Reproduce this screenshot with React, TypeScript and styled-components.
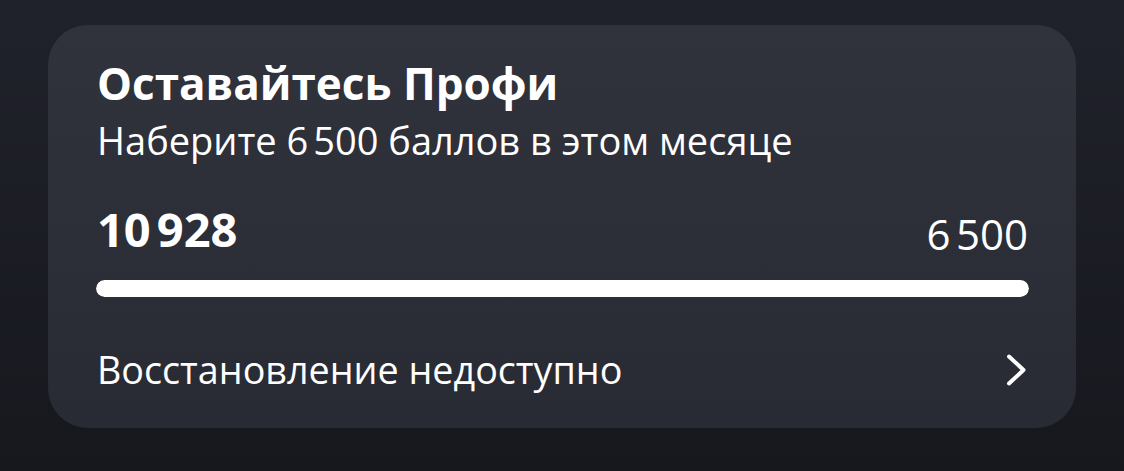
import styled, { createGlobalStyle } from 'styled-components';

const GlobalStyle = createGlobalStyle`
  html, body {
    margin: 0;
    padding: 0;
  }
  body {
    width: 1124px;
    height: 471px;
    overflow: hidden;
    background: linear-gradient(180deg, #20222b 0%, #17181e 100%);
    font-family: 'Open Sans', 'Noto Sans', sans-serif;
    color: #ffffff;
  }
`;

const Page = styled.div`
  padding: 25px 48px 0 48px;
`;

const Card = styled.div`
  height: 403px;
  box-sizing: border-box;
  border-radius: 40px;
  background: linear-gradient(180deg, #30323c 0%, #292b34 100%);
  padding: 36px 47px 0 48px;
  display: flex;
  flex-direction: column;
`;

const Title = styled.h1`
  margin: 0 0 0 1px;
  font-size: 44px;
  font-weight: 700;
  line-height: 44px;
`;

const Subtitle = styled.p`
  margin: 13px 0 0 1px;
  font-size: 38px;
  font-weight: 400;
  line-height: 44px;
`;

const Amounts = styled.div`
  margin: 44px 1px 0 1px;
  display: flex;
  justify-content: space-between;
  align-items: flex-end;
`;

const Current = styled.span`
  font-size: 47px;
  font-weight: 700;
  line-height: 46px;
`;

const Goal = styled.span`
  font-size: 42px;
  font-weight: 400;
  line-height: 36px;
`;

const Track = styled.div`
  margin-top: 28px;
  height: 17px;
  border-radius: 9px;
  background: rgba(255, 255, 255, 0.15);
  overflow: hidden;
`;

const Fill = styled.div`
  height: 100%;
  border-radius: 9px;
  background: #ffffff;
`;

const Footer = styled.div`
  margin: 53px 1px 0 1px;
  display: flex;
  justify-content: space-between;
  align-items: center;
`;

const FooterText = styled.span`
  font-size: 37.7px;
  font-weight: 400;
  line-height: 40px;
`;

const Chevron = () => (
  <svg width="22" height="32" viewBox="0 0 22 32" fill="none">
    <path d="M3 2.5L17.5 16L3 29.5" stroke="#fff" strokeWidth="4" strokeLinecap="round" strokeLinejoin="round" />
  </svg>
);

const points = 10928;
const goal = 6500;

const App = () => {
  const progress = Math.min(points / goal, 1) * 100;
  return (
    <>
      <GlobalStyle />
      <Page>
        <Card>
          <Title>Оставайтесь Профи</Title>
          <Subtitle>Наберите 6&#8239;500 баллов в этом месяце</Subtitle>
          <Amounts>
            <Current>10&#8239;928</Current>
            <Goal>6&#8239;500</Goal>
          </Amounts>
          <Track>
            <Fill style={{ width: `${progress}%` }} />
          </Track>
          <Footer>
            <FooterText>Восстановление недоступно</FooterText>
            <Chevron />
          </Footer>
        </Card>
      </Page>
    </>
  );
};

export default App;
